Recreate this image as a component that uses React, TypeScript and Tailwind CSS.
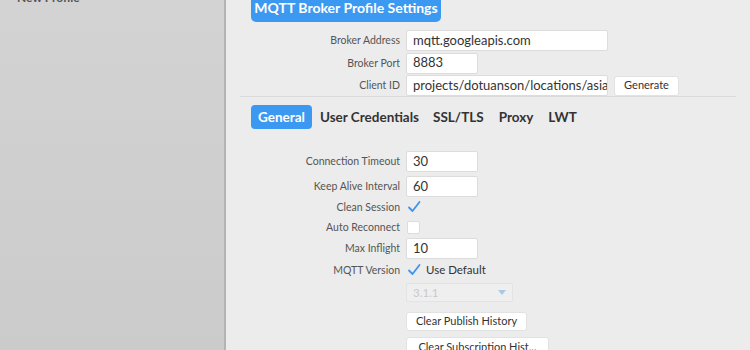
import React from "react";

const font = { fontFamily: "Lato, 'Open Sans', sans-serif" };

function Field({ label, children, h = "h-[21px]" }: { label: string; children: React.ReactNode; h?: string }) {
  return (
    <div className={`flex items-center ${h}`}>
      <div className="w-[155px] shrink-0 text-right text-[10.5px] text-[#555] pr-[6px] leading-none whitespace-nowrap">{label}</div>
      {children}
    </div>
  );
}

function TextBox({ value, w }: { value: string; w: string }) {
  return (
    <div className={`${w} h-[21px] bg-white border border-[#dcdcdc] rounded-[2px] px-[6px] flex items-center text-[13px] text-[#333] overflow-hidden whitespace-nowrap`}>
      {value}
    </div>
  );
}

function Check({ on }: { on: boolean }) {
  if (on)
    return (
      <svg width="14" height="14" viewBox="0 0 14 14" className="ml-[1px]">
        <path d="M2 7.5 L5.5 11 L12.5 2" fill="none" stroke="#3b95ee" strokeWidth="1.8" strokeLinecap="round" strokeLinejoin="round" />
      </svg>
    );
  return <div className="w-[13px] h-[13px] bg-white border border-[#dcdcdc] rounded-[2px] ml-[1px]" />;
}

export default function App() {
  return (
    <div className="w-[750px] h-[350px] flex overflow-hidden bg-[#ececec]" style={font}>
      <div className="w-[226px] shrink-0 bg-gradient-to-b from-[#d3d3d3] to-[#cbcbcb] border-r-2 border-[#b4b4b4]">
        <div className="pl-[17px] -mt-[11px] text-[12px] font-bold text-[#555] whitespace-nowrap">New Profile</div>
      </div>
      <div className="flex-1 pl-[25px]">
        <div className="w-[190px] h-[26px] -mt-[4px] bg-[#3c99f2] rounded-[5px] flex items-end justify-center pb-[4px] text-white text-[14px] font-bold whitespace-nowrap">
          MQTT Broker Profile Settings
        </div>
        <div className="mt-[8px] flex flex-col gap-[1.5px]">
          <Field label="Broker Address">
            <TextBox value="mqtt.googleapis.com" w="w-[202px]" />
          </Field>
          <Field label="Broker Port">
            <TextBox value="8883" w="w-[72px]" />
          </Field>
          <Field label="Client ID">
            <TextBox value="projects/dotuanson/locations/asia-east1/registries" w="w-[202px]" />
            <div className="ml-[6px] w-[65px] h-[20px] bg-white rounded-[3px] border border-[#e2e2e2] flex items-center justify-center text-[11px] text-[#333]">
              Generate
            </div>
          </Field>
        </div>
        <div className="-ml-[11px] w-[496px] h-[1px] bg-[#dadada]" />
        <div className="mt-[8px] flex items-center h-[24px] text-[13.5px] font-bold text-[#333] whitespace-nowrap">
          <div className="h-[24px] px-[7px] bg-[#3c99f2] text-white rounded-[4px] flex items-center">General</div>
          <div className="ml-[8px]">User Credentials</div>
          <div className="ml-[14px]">SSL/TLS</div>
          <div className="ml-[15px]">Proxy</div>
          <div className="ml-[15px]">LWT</div>
        </div>
        <div className="mt-[22px] flex flex-col">
          <Field label="Connection Timeout">
            <TextBox value="30" w="w-[72px]" />
          </Field>
          <div className="mt-[4px]">
            <Field label="Keep Alive Interval">
              <TextBox value="60" w="w-[72px]" />
            </Field>
          </div>
          <Field label="Clean Session" h="h-[20px]">
            <Check on={true} />
          </Field>
          <Field label="Auto Reconnect" h="h-[20px]">
            <Check on={false} />
          </Field>
          <div className="mt-[1px]">
            <Field label="Max Inflight">
              <TextBox value="10" w="w-[72px]" />
            </Field>
          </div>
          <Field label="MQTT Version" h="h-[22px]">
            <Check on={true} />
            <span className="ml-[5px] text-[11.5px] text-[#333]">Use Default</span>
          </Field>
          <div className="mt-[2px] ml-[155px] w-[107px] h-[19px] bg-[#efefef] border border-[#e3e3e3] rounded-[2px] flex items-center justify-between px-[6px] text-[11.5px] text-[#c9c9c9]">
            <span>3.1.1</span>
            <svg width="8" height="5" viewBox="0 0 8 5"><path d="M0 0 L8 0 L4 5 Z" fill="#a9c8ea" /></svg>
          </div>
          <div className="mt-[10px] ml-[155px] w-[121px] h-[19px] bg-white border border-[#e2e2e2] rounded-[3px] flex items-center justify-center text-[11px] text-[#333] whitespace-nowrap">
            Clear Publish History
          </div>
          <div className="mt-[6px] ml-[155px] w-[143px] h-[20px] bg-white border border-[#e2e2e2] rounded-[3px] flex items-center justify-center text-[11px] text-[#333] whitespace-nowrap">
            Clear Subscription Hist...
          </div>
        </div>
      </div>
    </div>
  );
}
